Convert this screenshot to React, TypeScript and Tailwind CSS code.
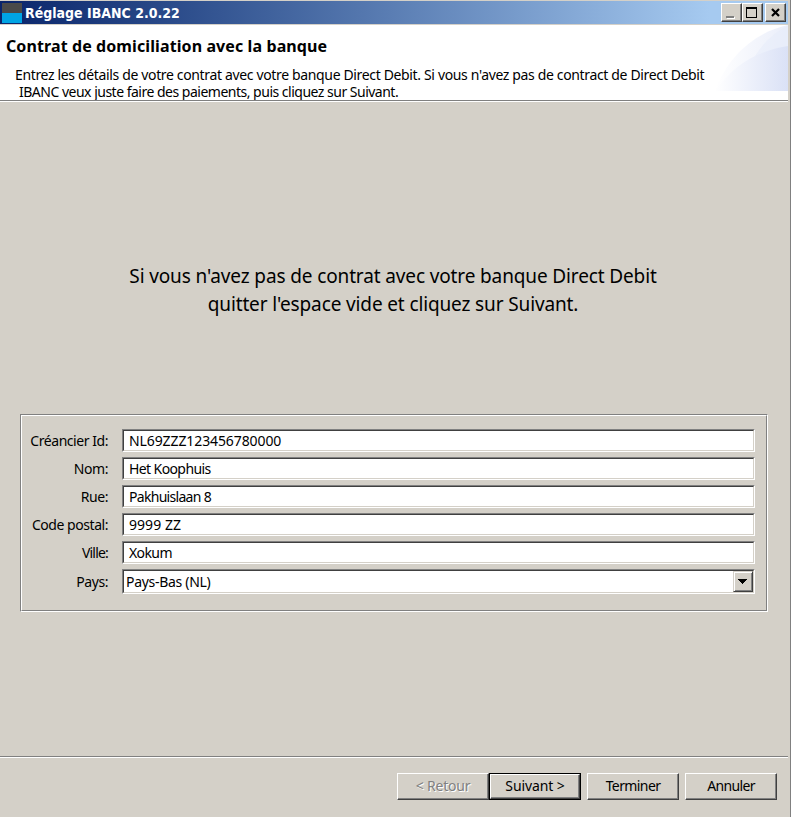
import type { ReactNode } from 'react'

const fields = [
  { label: 'Créancier Id:', value: 'NL69ZZZ123456780000', spacing: 'tracking-[-0.1px]' },
  { label: 'Nom:', value: 'Het Koophuis', spacing: 'tracking-[-0.6px]' },
  { label: 'Rue:', value: 'Pakhuislaan 8', spacing: 'tracking-[-0.7px]' },
  { label: 'Code postal:', value: '9999 ZZ', spacing: 'tracking-[0.05px]' },
  { label: 'Ville:', value: 'Xokum', spacing: 'tracking-[-0.6px]', labelSpacing: 'tracking-[-0.8px]' },
]

const raised =
  'border border-t-white border-l-white border-r-[#404040] border-b-[#404040] bg-[#d4d0c8] shadow-[inset_-1px_-1px_0_#808080]'
const sunken =
  'border border-t-[#808080] border-l-[#808080] border-r-white border-b-white'
const sunkenInner =
  'border border-t-[#404040] border-l-[#404040] border-r-[#d4d0c8] border-b-[#d4d0c8] bg-white'

function CaptionButton({ label, children }: { label: string; children: ReactNode }) {
  return (
    <button aria-label={label} className={`h-[19px] w-[21px] ${raised}`}>
      <svg width="19" height="17" viewBox="0 0 19 17">
        {children}
      </svg>
    </button>
  )
}

function TitleBar() {
  return (
    <header className="mt-px flex h-[23px] items-center bg-linear-to-r from-[#0a246a] to-[#a6caf0] to-90% pl-[2px] pr-[2px]">
      <div className="h-5 w-5 bg-[#4a4a4a] pt-[10px]">
        <div className="h-[10px] bg-[#00a4e4]" />
      </div>
      <h1 className="ml-[3px] font-['DejaVu_Sans_Condensed','DejaVu_Sans',sans-serif] text-[14px] leading-5 font-bold whitespace-nowrap text-white">
        Réglage IBANC 2.0.22
      </h1>
      <div className="ml-auto flex">
        <CaptionButton label="Réduire">
          <path d="M5 13h8v2H5z" fill="#fff" />
          <path d="M4 12h8v2H4z" fill="#808080" />
        </CaptionButton>
        <CaptionButton label="Agrandir">
          <path d="M3 3h11v11H3zM4 5v8h9V5z" fill="#000" fillRule="evenodd" />
        </CaptionButton>
        <div className="w-[2px]" />
        <CaptionButton label="Fermer">
          <path d="M6 5l7 7M13 5l-7 7" stroke="#000" strokeWidth="2.2" fill="none" />
        </CaptionButton>
      </div>
    </header>
  )
}

function Banner() {
  return (
    <section className="mt-px flex h-[75px] justify-between bg-white text-black">
      <div className="w-[713px] whitespace-nowrap">
        <h2 className="mt-[10px] ml-[6px] text-[16px] leading-[22px] font-bold tracking-[0.1px]">
          Contrat de domiciliation avec la banque
        </h2>
        <p className="mt-[9px] ml-[15px] text-[14px] leading-[17px] tracking-[-0.35px]">
          Entrez les détails de votre contrat avec votre banque Direct Debit. Si vous n'avez pas de contract de Direct Debit
        </p>
        <p className="ml-[19px] text-[14px] leading-[17px] tracking-[-0.5px]">
          IBANC veux juste faire des paiements, puis cliquez sur Suivant.
        </p>
      </div>
      <svg width="75" height="66" viewBox="0 0 75 66" className="shrink-0">
        <defs>
          <linearGradient id="swooshBack" x1="0" x2="1">
            <stop offset="0" stopColor="#fff" />
            <stop offset="1" stopColor="#eaeefa" />
          </linearGradient>
          <linearGradient id="swooshFront" x1="0" x2="1">
            <stop offset="0" stopColor="#fff" />
            <stop offset="1" stopColor="#dae1f6" />
          </linearGradient>
        </defs>
        <path d="M2 66C15 30 43 7 75 0v66z" fill="url(#swooshBack)" />
        <path d="M28 66C34 38 50 13 75 1v65z" fill="#e6ebf9" opacity="0.5" />
        <path d="M2 66C20 40 44 26 75 21v45z" fill="url(#swooshFront)" />
      </svg>
    </section>
  )
}

interface PushButtonProps {
  children: ReactNode
  spacing?: string
  isDefault?: boolean
  disabled?: boolean
}

function PushButton({ children, spacing = 'tracking-[-0.1px]', isDefault = false, disabled = false }: PushButtonProps) {
  const text = disabled ? 'text-[#808080] [text-shadow:1px_1px_0_#fff]' : 'text-black'
  const face = `flex h-full w-full items-center justify-center pb-[2px] text-[14px] whitespace-nowrap ${spacing} ${raised} ${text}`
  return (
    <button disabled={disabled} className={`h-[27px] w-[92px] ${isDefault ? 'border border-black' : ''}`}>
      <span className={face}>{children}</span>
    </button>
  )
}

function Label({ children, spacing = 'tracking-[-0.45px]' }: { children: ReactNode; spacing?: string }) {
  return <span className={`w-[86px] text-right whitespace-nowrap ${spacing}`}>{children}</span>
}

export default function App() {
  return (
    <div className="flex h-[817px] w-[791px] flex-col overflow-hidden border-r border-[#808080] bg-[#d4d0c8] pr-[2px] font-['Noto_Sans','Open_Sans',sans-serif]">
      <TitleBar />
      <Banner />
      <div className="h-[2px] shrink-0 border-t border-b border-t-[#808080] border-b-white" />

      <main className="flex h-[654px] shrink-0 flex-col px-5 text-black">
        <p className="mt-[160px] mr-[2px] text-center text-[19px] leading-[28px] tracking-[-0.13px] whitespace-nowrap">
          Si vous n'avez pas de contrat avec votre banque Direct Debit
          <br />
          quitter l'espace vide et cliquez sur Suivant.
        </p>
        <div className="mt-[96px] h-[198px] border border-t-[#808080] border-r-white border-b-white border-l-[#808080]">
          <div className="h-[196px] border border-t-white border-r-[#808080] border-b-[#808080] border-l-white pt-[13px] text-[14px]">
            <div className="flex flex-col gap-[5px]">
              {fields.map(({ label, value, spacing, labelSpacing }) => (
                <div key={label} className="flex h-[23px] items-center gap-[14px]">
                  <Label spacing={labelSpacing}>{label}</Label>
                  <div className={`h-full w-[633px] ${sunken}`}>
                    <div className={`flex h-full items-center pl-[5px] whitespace-nowrap ${sunkenInner} ${spacing}`}>{value}</div>
                  </div>
                </div>
              ))}
              <div className="flex h-[25px] items-center gap-[14px]">
                <Label>Pays:</Label>
                <div className={`h-full w-[633px] ${sunken}`}>
                  <div className={`flex h-full items-center justify-between pl-[2px] tracking-[-0.3px] ${sunkenInner}`}>
                    Pays-Bas (NL)
                    <div className="h-[21px] w-5 border border-t-[#d4d0c8] border-r-[#404040] border-b-[#404040] border-l-[#d4d0c8] bg-[#d4d0c8] shadow-[inset_1px_1px_0_#fff,inset_-1px_-1px_0_#808080]">
                      <svg width="18" height="19" viewBox="0 0 18 19" shapeRendering="crispEdges">
                        <path d="M4 7h9v1h-1v1h-1v1h-1v1H9v1H8v-1H7v-1H6V9H5V8H4z" fill="#000" />
                      </svg>
                    </div>
                  </div>
                </div>
              </div>
            </div>
          </div>
        </div>
      </main>

      <div className="h-[2px] shrink-0 border-t border-b border-t-[#808080] border-b-white" />
      <footer className="flex justify-end gap-[6px] pt-[15px] pr-[11px]">
        <div className="flex">
          <PushButton disabled spacing="tracking-[-0.2px]">&lt; Retour</PushButton>
          <PushButton isDefault>Suivant &gt;</PushButton>
        </div>
        <PushButton spacing="tracking-[-0.6px]">Terminer</PushButton>
        <PushButton spacing="tracking-[-0.65px]">Annuler</PushButton>
      </footer>
    </div>
  )
}
